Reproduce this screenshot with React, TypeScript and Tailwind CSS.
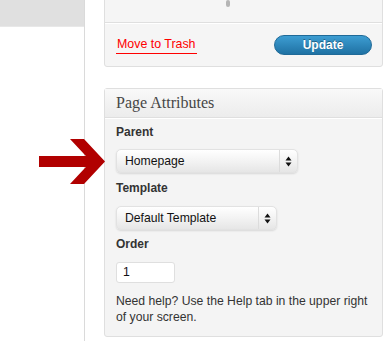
import React from "react";

const sans = { fontFamily: '"Liberation Sans", Arial, sans-serif' };

function Arrows() {
  return (
    <svg width="7" height="11" viewBox="0 0 7 11">
      <polygon points="3.5,0.5 6.5,4.5 0.5,4.5" fill="#111" />
      <polygon points="0.5,6.5 6.5,6.5 3.5,10.5" fill="#111" />
    </svg>
  );
}

function Select({ label, width }: { label: string; width: string }) {
  return (
    <div
      className={`flex h-[24px] ${width} items-stretch rounded-[5px] border border-[#e2e2e2] bg-gradient-to-b from-[#ffffff] via-[#f3f3f3] to-[#e6e6e6] shadow-[0_1px_2px_rgba(0,0,0,0.12)]`}
    >
      <div className="flex flex-1 items-center pl-[8px] text-[12.2px] text-[#111]">{label}</div>
      <div className="flex w-[18px] items-center justify-center border-l border-[#dcdcdc]">
        <Arrows />
      </div>
    </div>
  );
}

export default function App() {
  return (
    <div className="relative h-[341px] w-[390px] overflow-hidden bg-white" style={sans}>
      <div className="flex h-full">
        {/* left column */}
        <div className="flex w-[85px] flex-col border-r border-[#dadada]">
          <div className="h-[27px] border-b border-[#e8e8e8] bg-[#e0e0e0]" />
          <div className="flex-1 bg-white" />
        </div>
        <div className="w-[19px]" />
        {/* right column */}
        <div className="flex w-[279px] flex-col">
          {/* Publish panel (cut off) */}
          <div className="mt-[-10px] flex flex-col rounded-b-[3px] border border-[#dfdfdf] bg-[#f5f5f5]">
            <div className="relative h-[32px] border-b border-[#dfdfdf]">
              <div className="absolute left-[121px] top-[9px] h-[7px] w-[4px] rounded-full bg-[#b5b5b5]" />
            </div>
            <div className="flex h-[43px] items-center justify-between border-t border-white pl-[11px] pr-[10px]">
              <span className="border-b border-[#ff0000] px-[1px] pb-[1px] text-[12.4px] leading-[15px] text-[#ff0000]">
                Move to Trash
              </span>
              <button
                className="flex h-[20px] w-[98px] items-center justify-center rounded-full border border-[#1f6a98] bg-gradient-to-b from-[#3d9dd2] to-[#1f72a4] text-[12px] font-bold text-white"
                style={{ textShadow: "0 -1px 0 rgba(0,0,0,0.35)" }}
              >
                Update
              </button>
            </div>
          </div>

          {/* Page Attributes */}
          <div className="mt-[21px] flex h-[249px] flex-col rounded-[3px] border border-[#dfdfdf] bg-[#f4f4f4]">
            <div className="flex h-[29px] items-center border-b border-[#dfdfdf] bg-gradient-to-b from-[#f9f9f9] to-[#ececec] pl-[11px]">
              <span
                className="text-[16px] leading-[20px] text-[#464646]"
                style={{ fontFamily: '"Liberation Serif", "Times New Roman", serif' }}
              >
                Page Attributes
              </span>
            </div>
            <div className="flex flex-col border-t border-white pl-[11px] text-[#333]">
              <div className="mt-[6px] text-[12px] font-bold leading-[15px]">Parent</div>
              <div className="mt-[9px]">
                <Select label="Homepage" width="w-[182px]" />
              </div>
              <div className="mt-[8px] text-[12px] font-bold leading-[15px]">Template</div>
              <div className="mt-[10px]">
                <Select label="Default Template" width="w-[161px]" />
              </div>
              <div className="mt-[7px] text-[12px] font-bold leading-[15px]">Order</div>
              <div className="mt-[10px] flex h-[21px] w-[59px] items-center rounded-[3px] border border-[#dfdfdf] bg-white pl-[6px] text-[12.2px] text-[#111]">
                1
              </div>
              <div className="mt-[10px] text-[12.2px] leading-[16px] text-[#333]">
                Need help? Use the Help tab in the upper right
                <br />
                of your screen.
              </div>
            </div>
          </div>
        </div>
      </div>

      {/* red arrow annotation */}
      <svg className="absolute left-0 top-0" width="120" height="200" viewBox="0 0 120 200">
        <rect x="39" y="156" width="54" height="11" fill="#b10000" />
        <polygon points="70,139 84,139 105,161.5 84,184 70,184 91,161.5" fill="#b10000" />
      </svg>
    </div>
  );
}
